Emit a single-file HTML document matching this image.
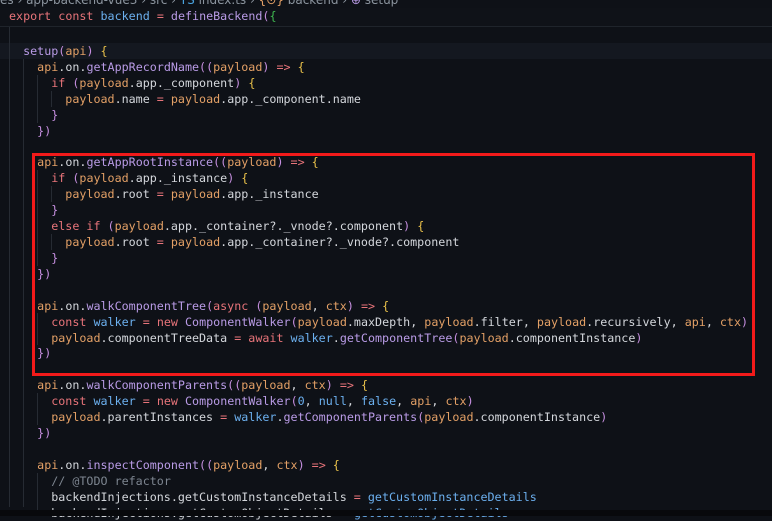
<!DOCTYPE html>
<html><head><style>
body{margin:0;width:772px;height:516px;overflow:hidden;background:#0e1117;font-family:"DejaVu Sans Mono","Liberation Mono",monospace;font-size:11.7px;color:#d4d7dc;position:relative}
.l{position:absolute;left:9px;height:16px;line-height:16px;white-space:pre}
.k{color:#e8747a}.f{color:#b99be6}.v{color:#6cb0ef}.p{color:#e3a066}.y{color:#e9c14a}.pu{color:#c68fe0}.g{color:#3fb950}.c{color:#7d8590}.o{color:#e8747a}
.guide{position:absolute;width:1px;background:#262b33}
</style></head><body>
<div style="position:absolute;left:0;top:-8px;font-family:'DejaVu Sans','Liberation Sans',sans-serif;font-size:12px;color:#8b949e;white-space:pre;line-height:16px">es › app-backend-vue3 › src › <span style="color:#4aa3df">TS</span> index.ts › <span style="color:#e3a066">{⊙}</span> backend › <span style="color:#b99be6">⊕</span> setup</div>
<div style="position:absolute;left:0;top:8px;width:772px;height:18px;background:#0f1218;border-bottom:1px solid #1f242b"></div>
<div class="l" style="top:8px"><span class="k">export</span> <span class="k">const</span> <span class="v">backend</span> <span class="o">=</span> <span class="f">defineBackend</span><span class="pu">(</span><span class="g">{</span></div>
<div style="position:absolute;left:0;top:43px;width:772px;height:16px;background:#141820"></div>
<div class="guide" style="left:9px;top:27px;height:480px"></div>
<div class="guide" style="left:23px;top:59px;height:448px"></div>
<div class="guide" style="left:37px;top:75px;height:48px"></div>
<div class="guide" style="left:51px;top:91px;height:16px"></div>
<div class="guide" style="left:37px;top:170px;height:96px"></div>
<div class="guide" style="left:51px;top:186px;height:16px"></div>
<div class="guide" style="left:51px;top:234px;height:16px"></div>
<div class="guide" style="left:37px;top:313px;height:32px"></div>
<div class="guide" style="left:37px;top:393px;height:32px"></div>
<div class="guide" style="left:37px;top:473px;height:40px"></div>
<div id="code" style="position:absolute;left:0;top:43px">
<div class="l" style="top:0px">  <span class="f">setup</span><span class="pu">(</span><span class="p">api</span><span class="pu">)</span> <span class="y">{</span></div>
<div class="l" style="top:15.92px">    <span class="p">api</span>.on.<span class="f">getAppRecordName</span><span class="pu">((</span><span class="p">payload</span><span class="pu">)</span> <span class="o">=&gt;</span> <span class="y">{</span></div>
<div class="l" style="top:31.84px">      <span class="k">if</span> <span class="pu">(</span><span class="p">payload</span>.app._component<span class="pu">)</span> <span class="y">{</span></div>
<div class="l" style="top:47.76px">        <span class="p">payload</span>.name <span class="o">=</span> <span class="p">payload</span>.app._component.name</div>
<div class="l" style="top:63.68px">      <span class="pu">}</span></div>
<div class="l" style="top:79.6px">    <span class="pu">})</span></div>
<div class="l" style="top:111.44px">    <span class="p">api</span>.on.<span class="f">getAppRootInstance</span><span class="pu">((</span><span class="p">payload</span><span class="pu">)</span> <span class="o">=&gt;</span> <span class="y">{</span></div>
<div class="l" style="top:127.36px">      <span class="k">if</span> <span class="pu">(</span><span class="p">payload</span>.app._instance<span class="pu">)</span> <span class="y">{</span></div>
<div class="l" style="top:143.28px">        <span class="p">payload</span>.root <span class="o">=</span> <span class="p">payload</span>.app._instance</div>
<div class="l" style="top:159.2px">      <span class="pu">}</span></div>
<div class="l" style="top:175.12px">      <span class="k">else if</span> <span class="pu">(</span><span class="p">payload</span>.app._container?._vnode?.component<span class="pu">)</span> <span class="y">{</span></div>
<div class="l" style="top:191.04px">        <span class="p">payload</span>.root <span class="o">=</span> <span class="p">payload</span>.app._container?._vnode?.component</div>
<div class="l" style="top:206.96px">      <span class="pu">}</span></div>
<div class="l" style="top:222.88px">    <span class="pu">})</span></div>
<div class="l" style="top:254.72px">    <span class="p">api</span>.on.<span class="f">walkComponentTree</span><span class="pu">(</span><span class="k">async</span> <span class="pu">(</span><span class="p">payload</span>, <span class="p">ctx</span><span class="pu">)</span> <span class="o">=&gt;</span> <span class="y">{</span></div>
<div class="l" style="top:270.64px">      <span class="k">const</span> <span class="v">walker</span> <span class="o">=</span> <span class="k">new</span> <span class="f">ComponentWalker</span><span class="pu">(</span><span class="p">payload</span>.maxDepth, <span class="p">payload</span>.filter, <span class="p">payload</span>.recursively, <span class="p">api</span>, <span class="p">ctx</span><span class="pu">)</span></div>
<div class="l" style="top:286.56px">      <span class="p">payload</span>.componentTreeData <span class="o">=</span> <span class="k">await</span> <span class="v">walker</span>.<span class="f">getComponentTree</span><span class="pu">(</span><span class="p">payload</span>.componentInstance<span class="pu">)</span></div>
<div class="l" style="top:302.48px">    <span class="pu">})</span></div>
<div class="l" style="top:334.32px">    <span class="p">api</span>.on.<span class="f">walkComponentParents</span><span class="pu">((</span><span class="p">payload</span>, <span class="p">ctx</span><span class="pu">)</span> <span class="o">=&gt;</span> <span class="y">{</span></div>
<div class="l" style="top:350.24px">      <span class="k">const</span> <span class="v">walker</span> <span class="o">=</span> <span class="k">new</span> <span class="f">ComponentWalker</span><span class="pu">(</span><span class="v">0</span>, <span class="v">null</span>, <span class="v">false</span>, <span class="p">api</span>, <span class="p">ctx</span><span class="pu">)</span></div>
<div class="l" style="top:366.16px">      <span class="p">payload</span>.parentInstances <span class="o">=</span> <span class="v">walker</span>.<span class="f">getComponentParents</span><span class="pu">(</span><span class="p">payload</span>.componentInstance<span class="pu">)</span></div>
<div class="l" style="top:382.08px">    <span class="pu">})</span></div>
<div class="l" style="top:413.92px">    <span class="p">api</span>.on.<span class="f">inspectComponent</span><span class="pu">((</span><span class="p">payload</span>, <span class="p">ctx</span><span class="pu">)</span> <span class="o">=&gt;</span> <span class="y">{</span></div>
<div class="l" style="top:429.84px">      <span class="c">// @TODO refactor</span></div>
<div class="l" style="top:445.76px">      backendInjections.getCustomInstanceDetails <span class="o">=</span> <span class="v">getCustomInstanceDetails</span></div>
<div class="l" style="top:461.68px">      backendInjections.getCustomObjectDetails <span class="o">=</span> <span class="v">getCustomObjectDetails</span></div>
</div>
<div style="position:absolute;left:0;top:510px;width:772px;height:6px;background:#08090c"></div>
<div style="position:absolute;left:32px;top:153px;width:717px;height:217px;border:3px solid #f21a1a"></div>
</body></html>
